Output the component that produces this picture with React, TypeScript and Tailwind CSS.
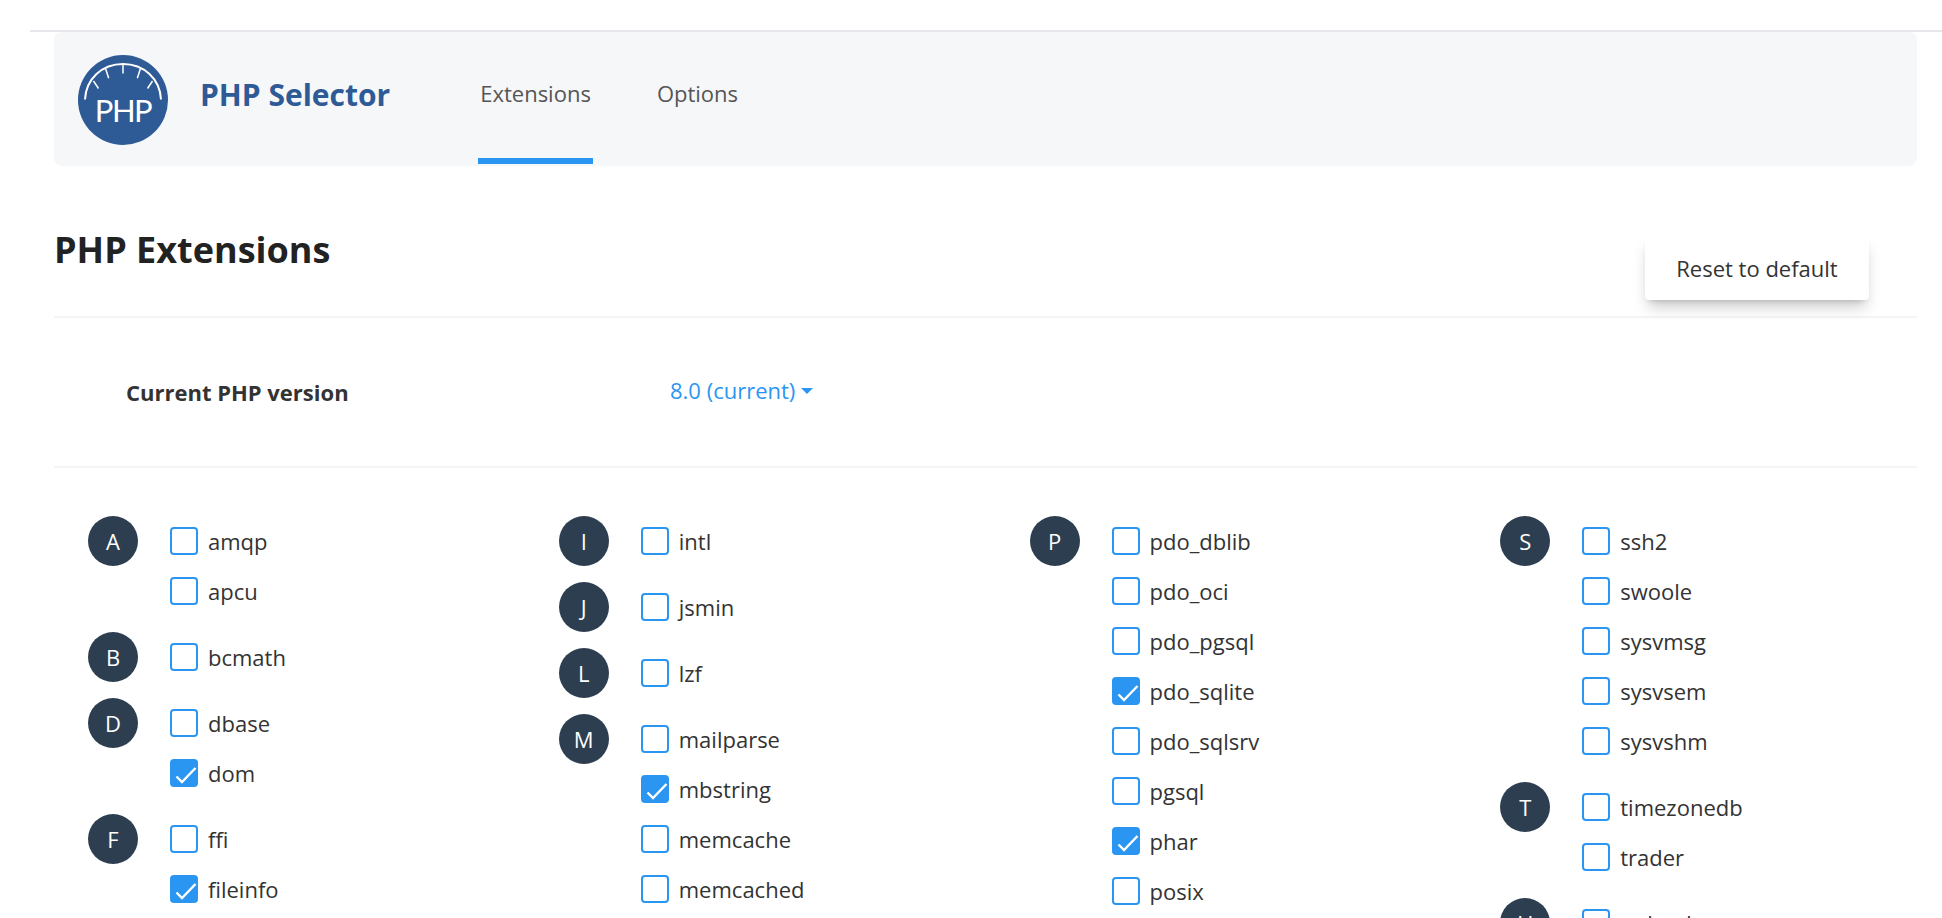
const font = { fontFamily: '"Open Sans", sans-serif' }

type Item = [string, boolean?]
type Group = { letter: string; items: Item[] }

const columns: Group[][] = [
  [
    { letter: "A", items: [["amqp"], ["apcu"]] },
    { letter: "B", items: [["bcmath"]] },
    { letter: "D", items: [["dbase"], ["dom", true]] },
    { letter: "F", items: [["ffi"], ["fileinfo", true]] },
  ],
  [
    { letter: "I", items: [["intl"]] },
    { letter: "J", items: [["jsmin"]] },
    { letter: "L", items: [["lzf"]] },
    { letter: "M", items: [["mailparse"], ["mbstring", true], ["memcache"], ["memcached"]] },
  ],
  [
    {
      letter: "P",
      items: [
        ["pdo_dblib"],
        ["pdo_oci"],
        ["pdo_pgsql"],
        ["pdo_sqlite", true],
        ["pdo_sqlsrv"],
        ["pgsql"],
        ["phar", true],
        ["posix"],
      ],
    },
  ],
  [
    { letter: "S", items: [["ssh2"], ["swoole"], ["sysvmsg"], ["sysvsem"], ["sysvshm"]] },
    { letter: "T", items: [["timezonedb"], ["trader"]] },
    { letter: "U", items: [["uploadprogress"]] },
  ],
]

function PhpLogo() {
  return (
    <svg viewBox="0 0 90 90" className="mt-0.5 size-[90px] shrink-0">
      <circle cx="45" cy="45" r="45" fill="#2e5a96" />
      <path d="M7 44.5 C8 24 24 9 45 9 C66 9 82 24 83 44.5" fill="none" stroke="#fff" strokeWidth="2" />
      <path
        d="M45 9v9.5M27.7 14l3 9.3M62.3 14l-3 9.3M15.5 26l5 7.5M74.5 26l-5 7.5"
        fill="none"
        stroke="#fff"
        strokeWidth="1.5"
      />
      <text
        x="45"
        y="67"
        textAnchor="middle"
        fill="#fff"
        fontSize="31"
        letterSpacing="-1.5"
        fontFamily="Lato, sans-serif"
      >
        PHP
      </text>
    </svg>
  )
}

function Check({ checked }: { checked?: boolean }) {
  if (checked) {
    return (
      <span className="size-7 shrink-0 rounded bg-[#2b96f1]">
        <svg viewBox="0 0 28 28" className="size-7" fill="none" stroke="#fff" strokeWidth="2.4">
          <path d="M6.5 17.5L12 23L25.5 9" />
        </svg>
      </span>
    )
  }
  return <span className="size-7 shrink-0 rounded border-2 border-[#2b96f1]" />
}

export default function App() {
  return (
    <div className="h-screen overflow-hidden bg-white pt-7.5 text-[22px] text-[#333]" style={font}>
      <div className="ml-7.5 border-t-2 border-gray-200" />
      <div className="ml-[54px] w-[1863px]">
        <header className="flex h-[134px] items-center rounded-lg bg-[#f6f7f9] pl-6">
          <PhpLogo />
          <span className="ml-8 pb-2 text-3xl font-bold text-[#2e5a96]">PHP Selector</span>
          <nav className="ml-22 flex h-full gap-16 text-[#555]">
            <a className="flex h-[132px] items-center border-b-6 border-[#2b96f1] px-0.5 pb-1">Extensions</a>
            <a className="flex h-[132px] items-center border-b-6 border-transparent pb-1">Options</a>
          </nav>
        </header>

        <div className="flex h-38 items-start justify-between border-b-2 border-gray-100">
          <h1 className="mt-16 text-4xl font-bold text-[#222]">PHP Extensions</h1>
          <button className="mt-17.5 mr-12 h-16 w-56 rounded bg-white shadow-lg shadow-black/20">
            Reset to default
          </button>
        </div>

        <div className="flex h-37.5 items-center border-b-2 border-gray-100 pl-18">
          <span className="w-136 font-bold">Current PHP version</span>
          <span className="-mt-1 text-[#2b96f1]">8.0 (current)</span>
          <span className="-mt-0.5 ml-1.5 border-x-6 border-t-6 border-x-transparent border-t-[#2b96f1]" />
        </div>

        <div className="mt-12 ml-8.5 grid w-[1883px] grid-cols-4">
          {columns.map((groups, i) => (
            <div key={i} className="flex flex-col gap-4">
              {groups.map((g) => (
                <div key={g.letter} className="flex gap-8">
                  <span className="flex size-12.5 shrink-0 items-center justify-center rounded-full bg-[#2c3e50] text-white">
                    {g.letter}
                  </span>
                  <div className="flex flex-col">
                    {g.items.map(([name, checked]) => (
                      <label key={name} className="flex h-12.5 items-center gap-2.5">
                        <Check checked={checked} />
                        {name}
                      </label>
                    ))}
                  </div>
                </div>
              ))}
            </div>
          ))}
        </div>
      </div>
    </div>
  )
}
